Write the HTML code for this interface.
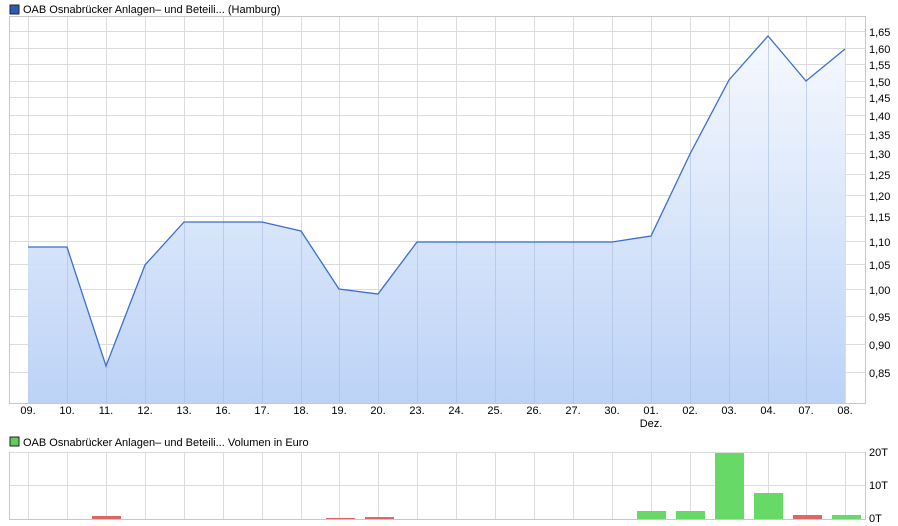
<!DOCTYPE html>
<html><head><meta charset="utf-8"><style>
body{margin:0;background:#fff;width:898px;height:526px;overflow:hidden}
svg{display:block}
text{font-family:"Liberation Sans","DejaVu Sans",sans-serif;font-size:11px;fill:#000}
</style></head><body>
<svg width="898" height="526" viewBox="0 0 898 526">
<defs><linearGradient id="g" x1="0" y1="0" x2="0" y2="1">
<stop offset="0" stop-color="#f6f9fe"/><stop offset="1" stop-color="#b8d0f6"/></linearGradient></defs>
<rect x="10" y="5" width="9" height="9" fill="#2a5cc0" stroke="#222" stroke-width="1"/>
<text x="23" y="13">OAB Osnabrücker Anlagen– und Beteili... (Hamburg)</text>
<g stroke="#dcdcdc" stroke-width="1">
<path d="M9.5 31.5H865M9.5 48.5H865M9.5 64.5H865M9.5 81.5H865M9.5 97.5H865M9.5 115.5H865M9.5 134.5H865M9.5 153.5H865M9.5 174.5H865M9.5 195.5H865M9.5 216.5H865M9.5 241.5H865M9.5 264.5H865M9.5 289.5H865M9.5 316.5H865M9.5 344.5H865M9.5 372.5H865"/>
<path d="M28.5 16V403M67.5 16V403M106.5 16V403M145.5 16V403M184.5 16V403M223.5 16V403M262.5 16V403M301.5 16V403M339.5 16V403M378.5 16V403M417.5 16V403M456.5 16V403M495.5 16V403M534.5 16V403M573.5 16V403M612.5 16V403M651.5 16V403M690.5 16V403M729.5 16V403M768.5 16V403M806.5 16V403M845.5 16V403"/>
</g>
<path d="M28 247L67 247L106 366L145 265L184 222L223 222L262 222L301 231L339 289L378 294L417 242L456 242L495 242L534 242L573 242L612 242L651 236L690 154L729 80L768 36L806 81L845 49L845 403L28 403Z" fill="url(#g)" fill-opacity="0.95"/>
<g stroke="#a9bfe2" stroke-width="1" opacity="0.6"><path d="M67.5 250V403M106.5 366V403M145.5 265V403M184.5 222V403M223.5 222V403M262.5 222V403M301.5 231V403M339.5 289V403M378.5 294V403M417.5 242V403M456.5 242V403M495.5 242V403M534.5 242V403M573.5 242V403M612.5 242V403M651.5 236V403M690.5 154V403M729.5 80V403M768.5 40V403M806.5 81V403"/></g>
<path d="M28 247L67 247L106 366L145 265L184 222L223 222L262 222L301 231L339 289L378 294L417 242L456 242L495 242L534 242L573 242L612 242L651 236L690 154L729 80L768 36L806 81L845 49" fill="none" stroke="#3a6fd0" stroke-width="1.3"/>
<rect x="9.5" y="16.5" width="856" height="387" fill="none" stroke="#c8c8c8"/>
<g>
<text x="869" y="36">1,65</text><text x="869" y="53">1,60</text><text x="869" y="69">1,55</text><text x="869" y="86">1,50</text><text x="869" y="102">1,45</text><text x="869" y="120">1,40</text><text x="869" y="139">1,35</text><text x="869" y="158">1,30</text><text x="869" y="179">1,25</text><text x="869" y="200">1,20</text><text x="869" y="221">1,15</text><text x="869" y="246">1,10</text><text x="869" y="269">1,05</text><text x="869" y="294">1,00</text><text x="869" y="321">0,95</text><text x="869" y="349">0,90</text><text x="869" y="377">0,85</text>
</g>
<g text-anchor="middle">
<text x="28" y="414">09.</text><text x="67" y="414">10.</text><text x="106" y="414">11.</text><text x="145" y="414">12.</text><text x="184" y="414">13.</text><text x="223" y="414">16.</text><text x="262" y="414">17.</text><text x="301" y="414">18.</text><text x="339" y="414">19.</text><text x="378" y="414">20.</text><text x="417" y="414">23.</text><text x="456" y="414">24.</text><text x="495" y="414">25.</text><text x="534" y="414">26.</text><text x="573" y="414">27.</text><text x="612" y="414">30.</text><text x="651" y="414">01.</text><text x="651" y="427">Dez.</text><text x="690" y="414">02.</text><text x="729" y="414">03.</text><text x="768" y="414">04.</text><text x="806" y="414">07.</text><text x="845" y="414">08.</text>
</g>
<rect x="10" y="437" width="9" height="9" fill="#5ccc5c" stroke="#222"/>
<text x="23" y="446">OAB Osnabrücker Anlagen– und Beteili... Volumen in Euro</text>
<g stroke="#dcdcdc"><path d="M9.5 452.5H865M9.5 485.5H865M28.5 452V519M67.5 452V519M106.5 452V519M145.5 452V519M184.5 452V519M223.5 452V519M262.5 452V519M301.5 452V519M339.5 452V519M378.5 452V519M417.5 452V519M456.5 452V519M495.5 452V519M534.5 452V519M573.5 452V519M612.5 452V519M651.5 452V519M690.5 452V519M729.5 452V519M768.5 452V519M806.5 452V519M845.5 452V519"/></g>
<rect x="92" y="516" width="29" height="3" fill="#e06666"/>
<rect x="326" y="518" width="29" height="1" fill="#e06666"/>
<rect x="365" y="517" width="29" height="2" fill="#e06666"/>
<rect x="637" y="511" width="29" height="8" fill="#66d966"/>
<rect x="676" y="511" width="29" height="8" fill="#66d966"/>
<rect x="715" y="453" width="29" height="66" fill="#66d966"/>
<rect x="754" y="493" width="29" height="26" fill="#66d966"/>
<rect x="793" y="515" width="29" height="4" fill="#e06666"/>
<rect x="832" y="515" width="29" height="4" fill="#66d966"/>
<path d="M9.5 452V519.5H865.5V452" fill="none" stroke="#c8c8c8"/>
<text x="869" y="456">20T</text><text x="869" y="489">10T</text><text x="869" y="522">0T</text>
</svg>
</body></html>
